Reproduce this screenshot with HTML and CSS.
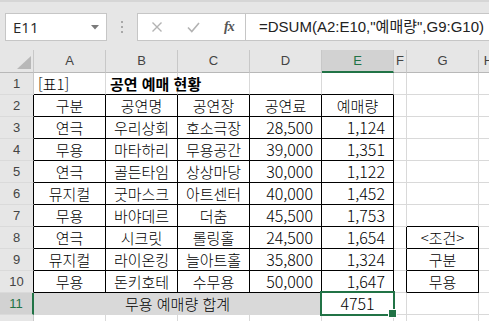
FILE: index.html
```html
<!DOCTYPE html>
<html lang="ko">
<head>
<meta charset="utf-8">
<link rel="stylesheet" href="styles.css">
</head>
<body>
<div class="app">
  <div class="fbar">
    <div class="namebox">
      <span class="ref">E11</span>
      <svg class="caret" width="8" height="5" viewBox="0 0 8 5"><polygon points="0,0 8,0 4,4.5" fill="#7a7a7a"/></svg>
    </div>
    <div class="grip"><i></i><i></i><i></i></div>
    <div class="btns">
      <svg class="btn" width="12" height="12" viewBox="0 0 12 12"><path d="M1.5 1.5 L10.5 10.5 M10.5 1.5 L1.5 10.5" stroke="#b3b3b3" stroke-width="1.4" fill="none"/></svg>
      <svg class="btn" width="13" height="11" viewBox="0 0 13 11"><path d="M1 5.5 L4.8 9.5 L12 1" stroke="#b3b3b3" stroke-width="1.6" fill="none"/></svg>
      <span class="fx">fx</span>
    </div>
    <div class="finput">=DSUM(A2:E10,"예매량",G9:G10)</div>
  </div>
  <div class="sheet">
    <div class="corner"><svg width="14" height="13" viewBox="0 0 14 13"><polygon points="14,0 14,13 0,13" fill="#b8b8b8"/></svg></div>
    <div class="ch">A</div><div class="ch">B</div><div class="ch">C</div><div class="ch">D</div><div class="ch sel">E</div><div class="ch">F</div><div class="ch">G</div><div class="ch">H</div>

    <div class="rh">1</div>
    <div class="c bb">[표1]</div><div class="c bb title">공연 예매 현황</div><div class="c bb"></div><div class="c bb"></div><div class="c bb"></div><div class="c"></div><div class="c"></div><div class="c"></div>

    <div class="rh k">2</div>
    <div class="c k ctr">구분</div><div class="c k ctr">공연명</div><div class="c k ctr">공연장</div><div class="c k ctr">공연료</div><div class="c k ctr">예매량</div><div class="c"></div><div class="c"></div><div class="c"></div>

    <div class="rh k">3</div>
    <div class="c k ctr">연극</div><div class="c k ctr">우리상회</div><div class="c k ctr">호소극장</div><div class="c k num">28,500</div><div class="c k num">1,124</div><div class="c"></div><div class="c"></div><div class="c"></div>

    <div class="rh k">4</div>
    <div class="c k ctr">무용</div><div class="c k ctr">마타하리</div><div class="c k ctr">무용공간</div><div class="c k num">39,000</div><div class="c k num">1,351</div><div class="c"></div><div class="c"></div><div class="c"></div>

    <div class="rh k">5</div>
    <div class="c k ctr">연극</div><div class="c k ctr">골든타임</div><div class="c k ctr">상상마당</div><div class="c k num">30,000</div><div class="c k num">1,122</div><div class="c"></div><div class="c"></div><div class="c"></div>

    <div class="rh k">6</div>
    <div class="c k ctr">뮤지컬</div><div class="c k ctr">굿마스크</div><div class="c k ctr">아트센터</div><div class="c k num">40,000</div><div class="c k num">1,452</div><div class="c"></div><div class="c"></div><div class="c"></div>

    <div class="rh k">7</div>
    <div class="c k ctr">무용</div><div class="c k ctr">바야데르</div><div class="c k ctr">더춤</div><div class="c k num">45,500</div><div class="c k num">1,753</div><div class="c"></div><div class="c bb"></div><div class="c"></div>

    <div class="rh k">8</div>
    <div class="c k ctr">연극</div><div class="c k ctr">시크릿</div><div class="c k ctr">롤링홀</div><div class="c k num">24,500</div><div class="c k num">1,654</div><div class="c br"></div><div class="c k ctr">&lt;조건&gt;</div><div class="c"></div>

    <div class="rh k">9</div>
    <div class="c k ctr">뮤지컬</div><div class="c k ctr">라이온킹</div><div class="c k ctr">늘아트홀</div><div class="c k num">35,800</div><div class="c k num">1,324</div><div class="c br"></div><div class="c k ctr">구분</div><div class="c"></div>

    <div class="rh k">10</div>
    <div class="c k ctr">무용</div><div class="c k ctr">돈키호테</div><div class="c k ctr">수무용</div><div class="c k num">50,000</div><div class="c k num">1,647</div><div class="c br"></div><div class="c k ctr">무용</div><div class="c"></div>

    <div class="rh rsel">11</div>
    <div class="c merged ctr">무용 예매량 합계</div><div class="c active ctr dig">4751</div><div class="c"></div><div class="c"></div><div class="c"></div>

    <div class="rh"></div>
    <div class="c"></div><div class="c"></div><div class="c"></div><div class="c"></div><div class="c"></div><div class="c"></div><div class="c"></div><div class="c"></div>
  </div>
</div>
</body>
</html>
```
FILE: styles.css
```css
* { box-sizing: border-box; }
html, body { margin: 0; padding: 0; }
body {
  width: 489px;
  height: 321px;
  overflow: hidden;
  background: #e6e6e6;
  font-family: "Liberation Sans", "Noto Sans CJK KR", sans-serif;
}
.app { width: 489px; height: 321px; overflow: hidden; }

.fbar {
  height: 50px;
  border-top: 2px solid #d6d6d6;
  padding: 11px 0 0 5px;
  display: flex;
  align-items: flex-start;
  background: #e6e6e6;
}
.namebox {
  width: 102px;
  height: 28px;
  background: #fff;
  border: 1px solid #c6c6c6;
  display: flex;
  align-items: center;
  justify-content: space-between;
  padding: 0 7px 0 7px;
}
.ref { font-family: "Open Sans", "Liberation Sans", sans-serif; font-size: 15px; color: #262626; }
.caret { margin-top: 1px; }
.grip {
  width: 30px;
  height: 28px;
  display: flex;
  flex-direction: column;
  align-items: center;
  justify-content: center;
  gap: 3px;
}
.grip i { display: block; width: 2px; height: 2px; background: #a8a8a8; }
.btns {
  width: 108px;
  height: 28px;
  background: #fff;
  border: 1px solid #c6c6c6;
  border-right: none;
  display: flex;
  align-items: center;
  padding-left: 13px;
  gap: 24px;
}
.fx { font-family: "Liberation Serif", serif; font-style: italic; font-size: 14px; color: #555; font-weight: bold; letter-spacing: -1px; }
.finput {
  flex: 1;
  height: 28px;
  background: #fff;
  border: 1px solid #c6c6c6;
  border-right: none;
  padding-left: 13px;
  font-size: 15px;
  line-height: 26px;
  color: #222;
  white-space: nowrap;
  overflow: hidden;
}

.sheet {
  display: grid;
  grid-template-columns: 34px 72px 72px 72px 72px 72px 13px 72px 20px;
  grid-template-rows: 23px repeat(12, 22px);
  background: #fff;
  color: #000;
}
.corner {
  background: #e6e6e6;
  border-right: 1px solid #c8c8c8;
  border-bottom: 1px solid #b8b8b8;
  display: flex;
  align-items: flex-end;
  justify-content: flex-end;
  padding: 0 2px 3px 0;
}
.ch {
  background: #e6e6e6;
  border-right: 1px solid #c8c8c8;
  border-bottom: 1px solid #b8b8b8;
  font-size: 13px;
  color: #444;
  text-align: center;
  line-height: 22px;
  overflow: hidden;
}
.ch.sel {
  background: #d2d2d2;
  color: #217346;
  border-bottom: 2px solid #217346;
}
.rh {
  background: #e6e6e6;
  border-right: 1px solid #c8c8c8;
  border-bottom: 1px solid #dadada;
  font-size: 13px;
  color: #444;
  text-align: center;
  line-height: 21px;
}
.rh.k { border-right-color: #000; }
.rh.rsel {
  background: #d2d2d2;
  color: #217346;
  border-right: 2px solid #217346;
}
.c {
  border-right: 1px solid #d9d9d9;
  border-bottom: 1px solid #d9d9d9;
  font-family: "Noto Sans CJK KR", "Liberation Sans", sans-serif;
  font-size: 15px;
  line-height: 21px;
  white-space: nowrap;
  padding: 0 4px;
  font-weight: 300;
}
.c.bb { border-bottom-color: #000; }
.c.br { border-right-color: #000; }
.c.k { border-right-color: #000; border-bottom-color: #000; }
.c.title { font-weight: 700; overflow: visible; }
.ctr { text-align: center; }
.num { text-align: right; padding-right: 8px; font-size: 16px; }
.dig { font-size: 16px; }
.merged {
  grid-column: span 4;
  background: #d9d9d9;
}
.active { position: relative; }
.active::after {
  content: "";
  position: absolute;
  left: -2px; top: -2px; right: -2px; bottom: -2px;
  border: 2px solid #217346;
}
.active::before {
  content: "";
  position: absolute;
  right: -4px; bottom: -4px;
  width: 7px; height: 7px;
  background: #217346;
  border: 1px solid #fff;
  z-index: 1;
}
```
